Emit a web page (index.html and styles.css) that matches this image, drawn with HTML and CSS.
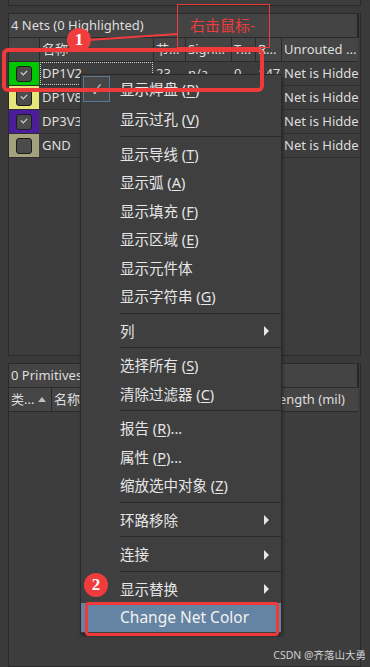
FILE: index.html
```html
<!DOCTYPE html>
<html lang="zh-CN">
<head>
<meta charset="UTF-8">
<title>PCB Nets</title>
<meta name="viewport" content="width=device-width, initial-scale=1.0">
<link rel="stylesheet" href="styles.css">
</head>
<body>

<div class="app">

    <div class="stub"></div>

    <!-- NETS PANEL -->
    <section class="panel nets">
        <div class="panel-head">4 Nets (0 Highlighted)</div>
        <div class="grid cols">
            <div class="cell">•</div>
            <div class="cell">名称</div>
            <div class="cell">节...</div>
            <div class="cell">Sign...</div>
            <div class="cell">T...</div>
            <div class="cell">R...</div>
            <div class="cell">Unrouted ...</div>
        </div>

        <div class="grid row">
            <div class="swatch green"><span class="check on"></span></div>
            <div class="cell name focus">DP1V2</div>
            <div class="cell">23</div>
            <div class="cell">n/a</div>
            <div class="cell">0</div>
            <div class="cell">147</div>
            <div class="cell">Net is Hidde</div>
        </div>
        <div class="grid row">
            <div class="swatch yellow"><span class="check on"></span></div>
            <div class="cell name">DP1V8</div>
            <div class="cell"></div>
            <div class="cell"></div>
            <div class="cell"></div>
            <div class="cell"></div>
            <div class="cell">Net is Hidde</div>
        </div>
        <div class="grid row">
            <div class="swatch purple"><span class="check on"></span></div>
            <div class="cell name">DP3V3</div>
            <div class="cell"></div>
            <div class="cell"></div>
            <div class="cell"></div>
            <div class="cell"></div>
            <div class="cell">Net is Hidde</div>
        </div>
        <div class="grid row">
            <div class="swatch olive"><span class="check"></span></div>
            <div class="cell name">GND</div>
            <div class="cell"></div>
            <div class="cell"></div>
            <div class="cell"></div>
            <div class="cell"></div>
            <div class="cell">Net is Hidde</div>
        </div>
    </section>

    <!-- PRIMITIVES PANEL -->
    <section class="panel prims">
        <div class="panel-head">0 Primitives</div>
        <div class="pcols">
            <div class="pcell first">类... <span class="sort"></span></div>
            <div class="pcell">名称</div>
            <div class="pcell grow"></div>
            <div class="pcell len">Length (mil)</div>
        </div>
    </section>

</div>

<!-- CONTEXT MENU -->
<div class="menu">
    <div class="item"><span class="tick">✓</span>显示焊盘 (<u>P</u>)</div>
    <div class="item">显示过孔 (<u>V</u>)</div>
    <div class="sep"></div>
    <div class="item">显示导线 (<u>T</u>)</div>
    <div class="item">显示弧 (<u>A</u>)</div>
    <div class="item">显示填充 (<u>F</u>)</div>
    <div class="item">显示区域 (<u>E</u>)</div>
    <div class="item">显示元件体</div>
    <div class="item">显示字符串 (<u>G</u>)</div>
    <div class="sep"></div>
    <div class="item sub">列</div>
    <div class="sep"></div>
    <div class="item">选择所有 (<u>S</u>)</div>
    <div class="item">清除过滤器 (<u>C</u>)</div>
    <div class="sep"></div>
    <div class="item">报告 (<u>R</u>)...</div>
    <div class="item">属性 (<u>P</u>)...</div>
    <div class="item">缩放选中对象 (<u>Z</u>)</div>
    <div class="sep"></div>
    <div class="item sub">环路移除</div>
    <div class="sep"></div>
    <div class="item sub">连接</div>
    <div class="sep"></div>
    <div class="item sub">显示替换</div>
    <div class="item active">Change Net Color</div>
</div>

<!-- ANNOTATIONS -->
<svg class="lines" width="370" height="667">
    <line x1="88" y1="40" x2="178" y2="34" stroke="#f03c3c" stroke-width="2"/>
</svg>
<div class="note">右击鼠标-</div>
<div class="ring ring1"></div>
<div class="ring ring2"></div>
<div class="badge b1">1</div>
<div class="badge b2">2</div>

<div class="watermark">CSDN @齐落山大勇</div>

</body>
</html>
```

FILE: styles.css
```css
body {
    margin: 0;
    width: 370px;
    height: 667px;
    overflow: hidden;
    background: #3a3a3a;
    color: #dedede;
    font-family: "Noto Sans", "Noto Sans CJK SC", sans-serif;
    font-size: 13px;
}

.app {
    display: flex;
    flex-direction: column;
    height: 667px;
    padding: 0 9px 0 8px;
}

/* PANELS */
.stub {
    height: 5px;
    border: 1px solid #2a2a2a;
    border-top: none;
    background: #3d3d3d;
    margin-bottom: 7px;
}

.panel {
    border: 1px solid #2a2a2a;
    background: #3d3d3d;
}

.nets {
    height: 341px;
    margin-bottom: 7px;
}

.prims {
    flex: 1;
}

.panel-head {
    height: 23px;
    line-height: 23px;
    padding-left: 2px;
    background: #444;
    border-bottom: 1px solid #2a2a2a;
    border-right: 2px solid #262626;
    margin-right: 1px;
}

/* NET TABLE */
.grid {
    display: grid;
    grid-template-columns: 30px 114px 32px 46px 24px 26px 1fr;
    height: 23px;
    border-bottom: 1px solid #2e2e2e;
}

.cols {
    background: #454545;
    border-bottom: 1px solid #2a2a2a;
    margin-right: 2px;
}

.cell {
    padding-left: 3px;
    line-height: 23px;
    white-space: nowrap;
    overflow: hidden;
}

.cols .cell {
    border-left: 1px solid #2a2a2a;
    padding-left: 2px;
}

.cols .cell:first-child {
    border-left: none;
}

.row .cell.name {
    margin-left: 1px;
    padding-left: 2px;
}

.focus {
    outline: 1px dotted #cfcfcf;
    outline-offset: -1px;
}

.swatch {
    display: flex;
    align-items: center;
    justify-content: center;
}

.green { background: #00c800; }
.yellow { background: #e6e67a; }
.purple { background: #4b1c9c; }
.olive { background: #a4a27c; }

.check {
    width: 14px;
    height: 14px;
    border: 1px solid #1c1c1c;
    border-radius: 3px;
    background: #4c4c4c;
    position: relative;
}

.check.on::after {
    content: "";
    position: absolute;
    left: 4px;
    top: 3px;
    width: 5px;
    height: 3px;
    border-left: 1.5px solid #e0e0e0;
    border-bottom: 1.5px solid #e0e0e0;
    transform: rotate(-45deg);
}

/* PRIMITIVES TABLE */
.pcols {
    display: flex;
    height: 23px;
    background: #454545;
    border-bottom: 1px solid #2a2a2a;
    margin-right: 2px;
}

.pcell {
    line-height: 23px;
    padding-left: 2px;
    border-left: 1px solid #2a2a2a;
    white-space: nowrap;
}

.pcell.first {
    border-left: none;
    width: 40px;
    display: flex;
    align-items: center;
    gap: 4px;
}

.pcell.grow {
    flex: 1;
}

.pcell.len {
    width: 86px;
}

.sort {
    width: 0;
    height: 0;
    border-left: 4px solid transparent;
    border-right: 4px solid transparent;
    border-bottom: 5px solid #bdbdbd;
}

/* CONTEXT MENU */
.menu {
    position: absolute;
    left: 80px;
    top: 74px;
    width: 200px;
    padding: 0 0 1px;
    background: #3f3f3f;
    border: 1px solid #2a2a2a;
    box-shadow: 1px 2px 3px rgba(0,0,0,0.35);
    font-size: 14.5px;
    color: #e6e6e6;
}

.item {
    position: relative;
    height: 28.5px;
    line-height: 28.5px;
    padding-left: 39px;
    white-space: nowrap;
}

.item:first-child {
    height: 30px;
    line-height: 28px;
}

.item u {
    text-underline-offset: 2px;
}

.tick {
    position: absolute;
    left: 2px;
    top: 1px;
    width: 25px;
    height: 24px;
    line-height: 24px;
    text-align: center;
    font-size: 13px;
    border: 1px solid #5b7690;
    background: #474747;
    color: #d0d0d0;
}

.sub::after {
    content: "";
    position: absolute;
    right: 12px;
    top: 9.5px;
    border-top: 5px solid transparent;
    border-bottom: 5px solid transparent;
    border-left: 5px solid #e6e6e6;
}

.sep {
    height: 1px;
    margin: 2px 0 3px 39px;
    background: #2a2a2a;
}

.item.active {
    background: #6583a2;
    color: #f2f2f2;
    font-size: 15.5px;
}

/* ANNOTATIONS */
.lines {
    position: absolute;
    left: 0;
    top: 0;
}

.note {
    position: absolute;
    left: 177px;
    top: 4px;
    width: 93px;
    height: 44px;
    box-sizing: border-box;
    border: 1.5px solid #ee3b3b;
    color: #ee3b3b;
    font-size: 15px;
    line-height: 40px;
    padding-left: 12px;
}

.ring {
    position: absolute;
    border: 4px solid #f03a3a;
    border-radius: 6px;
}

.ring1 {
    left: 2px;
    top: 48px;
    width: 254px;
    height: 36px;
}

.ring2 {
    left: 85px;
    top: 602px;
    width: 188px;
    height: 28px;
    border-width: 3px;
    border-radius: 4px;
}

.badge {
    position: absolute;
    width: 24px;
    height: 24px;
    border-radius: 50%;
    background: #f03c3c;
    color: #fff;
    font-family: "Liberation Serif", serif;
    font-weight: bold;
    font-size: 17px;
    line-height: 24px;
    text-align: center;
}

.b1 { left: 67px; top: 28px; }
.b2 { left: 84px; top: 573px; }

.watermark {
    position: absolute;
    right: 4px;
    top: 647px;
    font-size: 10.5px;
    color: #d0d0d0;
}
```
